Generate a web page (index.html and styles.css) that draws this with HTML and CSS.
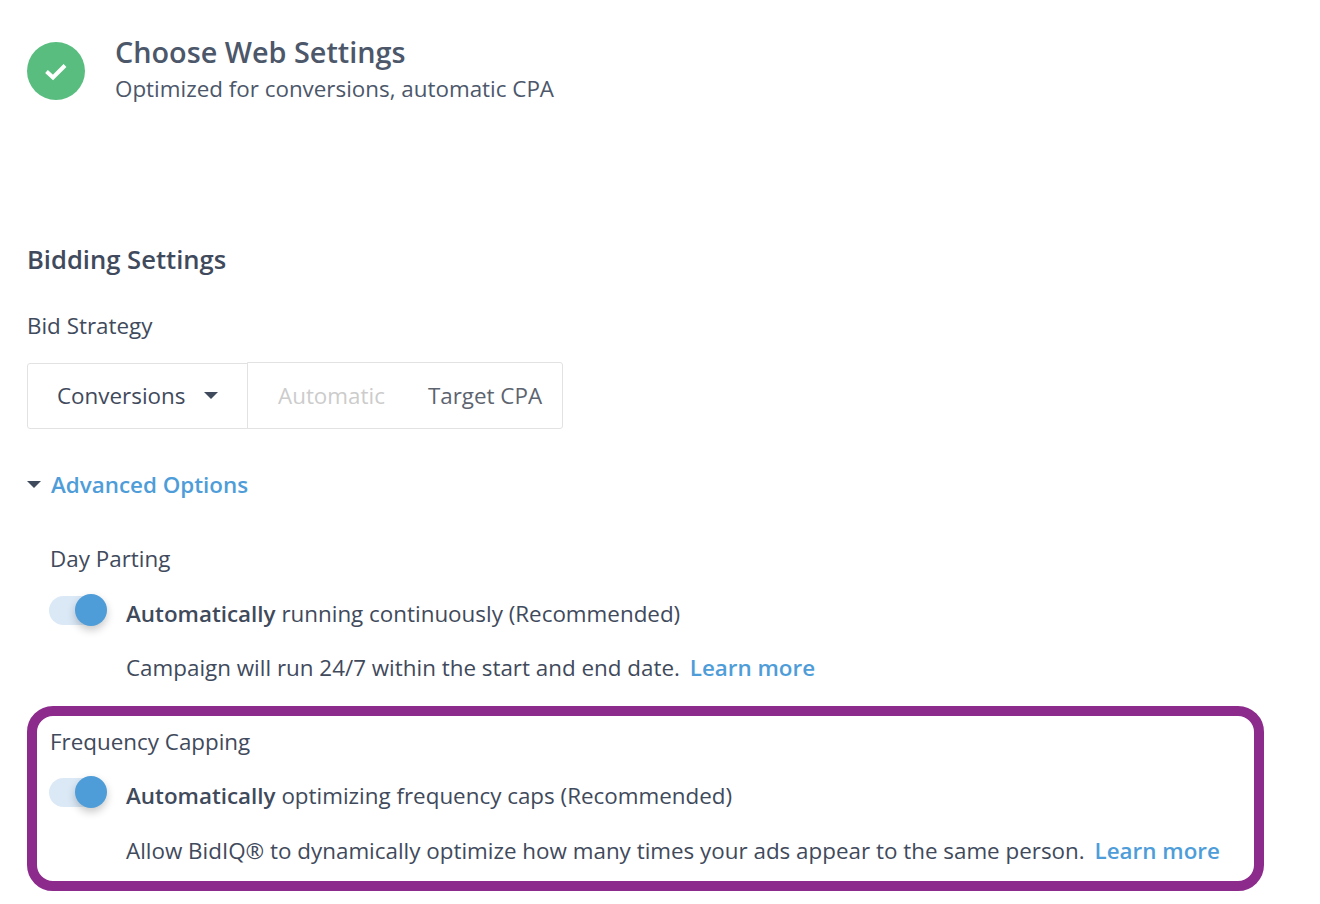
FILE: index.html
```html
<!DOCTYPE html>
<html lang="en">
<head>
<meta charset="utf-8">
<title>Choose Web Settings</title>
<link rel="stylesheet" href="styles.css">
</head>
<body>
<main class="page">
  <header class="step">
    <span class="step-icon">
      <svg width="24" height="24" viewBox="0 0 24 24"><path d="M2.5 12.5 L9 18.5 L21 6.5" fill="none" stroke="#fff" stroke-width="4"/></svg>
    </span>
    <div class="step-text">
      <h1 class="step-title">Choose Web Settings</h1>
      <p class="step-sub">Optimized for conversions, automatic CPA</p>
    </div>
  </header>

  <h2 class="section-title">Bidding Settings</h2>
  <div class="field-label">Bid Strategy</div>
  <div class="strategy">
    <div class="select">Conversions <span class="caret select-caret"></span></div>
    <div class="options">
      <span class="opt-disabled">Automatic</span>
      <span class="opt">Target CPA</span>
    </div>
  </div>

  <div class="advanced"><span class="caret"></span><span class="advanced-label">Advanced Options</span></div>

  <section class="option option-day">
    <div class="option-label">Day Parting</div>
    <div class="toggle-row">
      <span class="toggle"><span class="knob"></span></span>
      <span class="toggle-text"><b>Automatically</b> running continuously (Recommended)</span>
    </div>
    <p class="desc">Campaign will run 24/7 within the start and end date. <a class="link">Learn more</a></p>
  </section>

  <section class="option highlight">
    <div class="option-label">Frequency Capping</div>
    <div class="toggle-row">
      <span class="toggle"><span class="knob"></span></span>
      <span class="toggle-text"><b>Automatically</b> optimizing frequency caps (Recommended)</span>
    </div>
    <p class="desc">Allow BidIQ® to dynamically optimize how many times your ads appear to the same person. <a class="link">Learn more</a></p>
  </section>
</main>
</body>
</html>
```
FILE: styles.css
```css
* { box-sizing: border-box; }
html, body { margin: 0; padding: 0; background: #fff; }
body {
  font-family: "Open Sans", "Noto Sans", sans-serif;
  color: #3f4a5c;
  font-size: 22.4px;
  overflow: hidden;
  height: 904px;
}
.page { padding: 33px 0 0 27px; width: 1264px; }
.step { display: flex; align-items: flex-start; height: 215px; }
.step-icon {
  width: 58px; height: 58px; border-radius: 50%;
  background: #59bd7f; margin-top: 9px; flex: none;
  display: flex; align-items: center; justify-content: center;
}
.step-text { margin-left: 30px; }
.step-title { margin: 0; font-size: 28.8px; line-height: 38px; font-weight: 600; color: #4c576a; }
.step-sub { margin: 0; font-size: 22.4px; line-height: 35px; color: #4c576a; }
.section-title { margin: 0; font-size: 25.6px; line-height: 24px; font-weight: 600; color: #3f4a5c; }
.field-label { margin-top: 39px; line-height: 30px; }
.strategy { display: flex; margin-top: 21px; height: 67px; }
.select {
  width: 221px; height: 66px; margin-top: 1px;
  border: 1px solid #e2e2e2; border-radius: 3px 0 0 3px;
  padding: 0 0 2px 29px; display: flex; align-items: center;
}
.select-caret { margin-left: 19px; }
.options {
  width: 316px; border: 1px solid #e2e2e2;
  border-radius: 0 3px 3px 0; margin-left: -1px;
  padding-left: 30px; display: flex; align-items: center;
}
.opt-disabled { color: #ccc; }
.opt { color: #5d6470; margin-left: 43px; }
.caret {
  display: inline-block; width: 0; height: 0;
  border-left: 7px solid transparent; border-right: 7px solid transparent;
  border-top: 7px solid #3f4a5c;
}
.advanced { display: flex; align-items: center; margin-top: 39px; height: 32px; }
.advanced-label { color: #4e9dd9; margin-left: 10px; font-weight: 600; }
.option { padding-left: 23px; }
.option-day { margin-top: 44px; }
.option-label { line-height: 30px; }
.toggle-row { display: flex; align-items: center; margin-top: 22px; height: 32px; }
.option-day .toggle-row { margin-top: 23px; }
.toggle {
  position: relative; display: block; width: 52px; height: 29px;
  margin-left: -1px; margin-top: -5px;
  border-radius: 15px; background: #dbe9f7; flex: none;
}
.knob {
  position: absolute; left: 26px; top: -2px;
  width: 32px; height: 32px; border-radius: 50%;
  background: #4e9dd9; box-shadow: 0 4px 8px rgba(0,0,0,.22);
}
.toggle-text { margin-left: 25px; }
.toggle-text b { font-weight: 600; }
.desc { margin: 23px 0 0 76px; line-height: 32px; }
.highlight .desc { margin-top: 24px; }
.link { color: #4e9dd9; margin-left: 4px; font-weight: 600; }
.highlight {
  margin-top: 22px; height: 185px; border: 10px solid #8c2b8c;
  border-radius: 26px; padding: 11px 0 0 13px;
}
```
